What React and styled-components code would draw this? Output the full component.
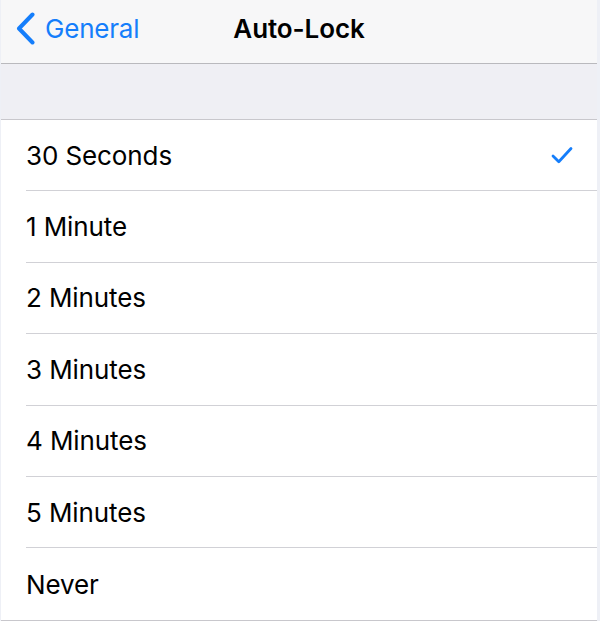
import styled, { createGlobalStyle } from 'styled-components';

const GlobalStyle = createGlobalStyle`
    html, body {
        margin: 0;
        padding: 0;
        background: #eef0f6;
    }
    body {
        font-family: Inter, "Noto Sans", "Liberation Sans", sans-serif;
        -webkit-font-smoothing: antialiased;
    }
`

const Screen = styled.div`
    width: 596px;
    height: 621px;
    margin-left: 1px;
    display: flex;
    flex-direction: column;
    background: #efeff4;
    overflow: hidden;
`

const NavBar = styled.div`
    height: 64px;
    flex-shrink: 0;
    box-sizing: border-box;
    padding-bottom: 7px;
    display: grid;
    grid-template-columns: 1fr auto 1fr;
    align-items: center;
    background: #f7f7f8;
    border-bottom: 1px solid #b9b9bd;
`

const BackButton = styled.div`
    display: flex;
    align-items: center;
    gap: 9px;
    padding-left: 14px;
    color: #157efb;
    font-size: 26px;
    letter-spacing: -0.2px;
`

const Title = styled.div`
    font-size: 26px;
    font-weight: 600;
    color: #000;
    letter-spacing: -0.1px;
`

const SectionGap = styled.div`
    height: 55px;
    flex-shrink: 0;
    background: #efeff4;
    border-bottom: 1px solid #c8c7cc;
`

const List = styled.div`
    background: #fff;
    border-bottom: 1px solid #c8c7cc;
`

const Row = styled.div`
    height: 71.4px;
    box-sizing: border-box;
    display: flex;
    align-items: center;
    padding-left: 25px;
`

const RowInner = styled.div`
    flex: 1;
    height: 100%;
    display: flex;
    align-items: center;
    justify-content: space-between;
    padding-right: 24px;
    box-sizing: border-box;
    border-bottom: ${props => props.last ? 'none' : '1px solid #d1d1d6'};
`

const Label = styled.span`
    font-size: 26px;
    color: #000;
    letter-spacing: -0.1px;
`

const options = ['30 Seconds', '1 Minute', '2 Minutes', '3 Minutes', '4 Minutes', '5 Minutes', 'Never'];

const Chevron = () => (
    <svg width="21" height="33" viewBox="0 0 21 33">
        <path d="M17.5 2.5 L4 16.5 L17.5 30.5" fill="none" stroke="#157efb" strokeWidth="4" strokeLinecap="round" strokeLinejoin="round" />
    </svg>
)

const Check = () => (
    <svg width="22" height="18" viewBox="0 0 22 18">
        <path d="M2 10 L7.8 15.8 L20 2.5" fill="none" stroke="#157efb" strokeWidth="2.8" strokeLinecap="round" strokeLinejoin="round" />
    </svg>
)

const App = () => {
    const selected = 0;

    return (
        <Screen>
            <GlobalStyle />
            <NavBar>
                <BackButton>
                    <Chevron />
                    General
                </BackButton>
                <Title>Auto-Lock</Title>
                <div />
            </NavBar>
            <SectionGap />
            <List>
                {options.map((opt, i) => (
                    <Row key={opt}>
                        <RowInner last={i === options.length - 1}>
                            <Label>{opt}</Label>
                            {i === selected && <Check />}
                        </RowInner>
                    </Row>
                ))}
            </List>
        </Screen>
    )
}

export default App;
